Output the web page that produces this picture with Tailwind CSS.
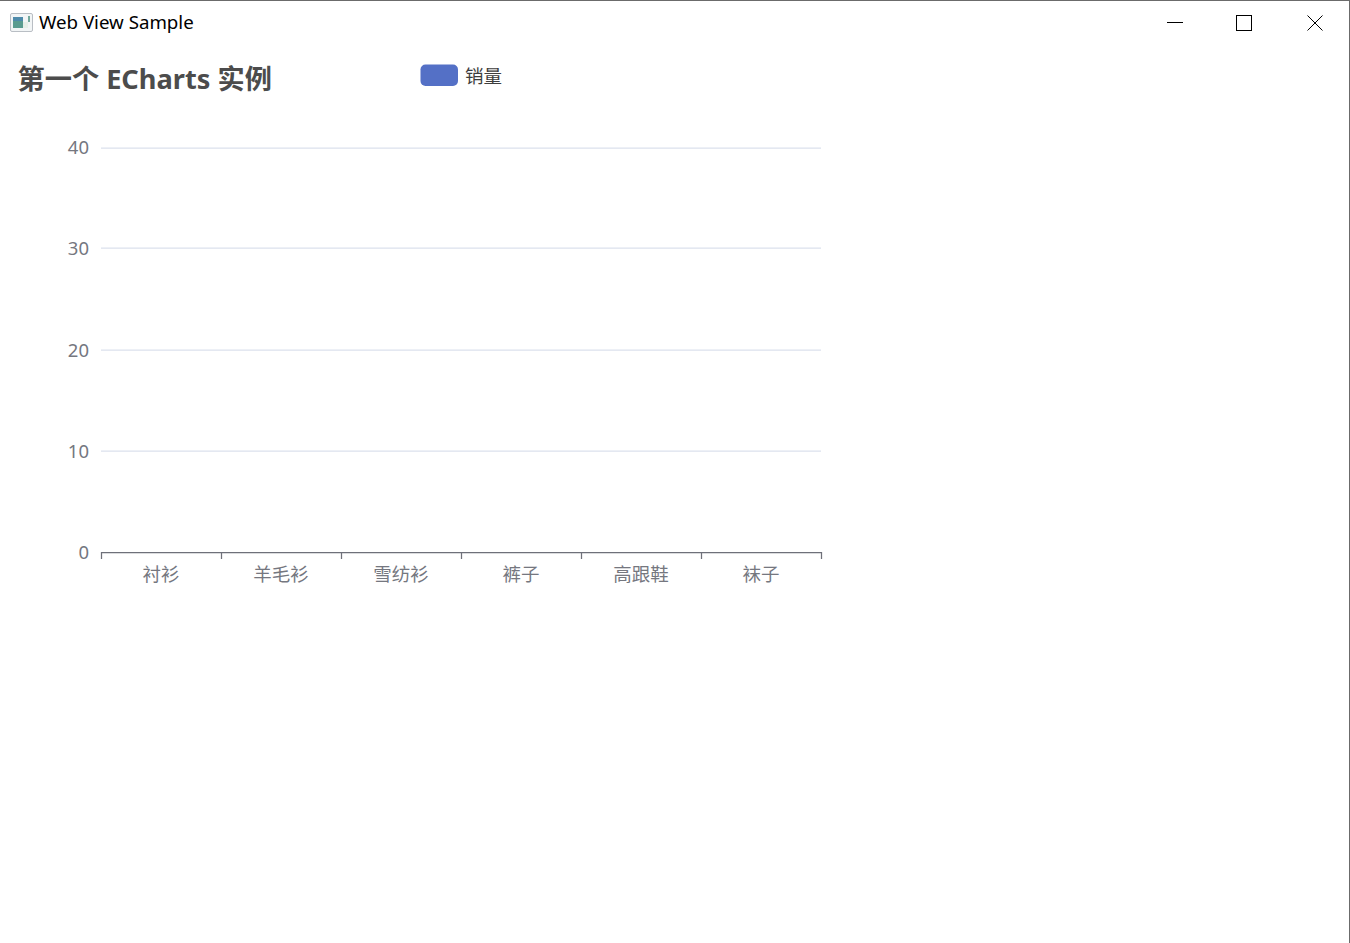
<!DOCTYPE html>
<html lang="en">
<head>
  <meta charset="UTF-8">
  <meta name="viewport" content="width=device-width, initial-scale=1.0">
  <title>Web View Sample</title>
  <script src="https://cdn.jsdelivr.net/npm/@tailwindcss/browser@4"></script>
</head>
<body class="bg-white overflow-hidden">
  <div class="w-[1350px] h-[943px] flex flex-col border-t border-r border-[#6b6b6b] font-['Noto_Sans','Noto_Sans_CJK_SC',sans-serif]">

    <!-- title bar -->
    <div class="h-[44px] flex items-center shrink-0">
      <svg class="ml-[10px] -translate-y-px" width="23" height="19" viewBox="0 0 23 19">
        <rect x="0.5" y="0.5" width="22" height="18" rx="1.5" fill="#f2f5f6" stroke="#b9bec4"/>
        <rect x="3" y="4" width="10" height="11" fill="#5a9c90"/>
        <rect x="3" y="4" width="10" height="4" fill="#4f8bab"/>
        <rect x="13" y="9" width="5" height="6" fill="#e6efe8"/>
        <rect x="18" y="3" width="2" height="6" fill="#74a99c"/>
      </svg>
      <span class="ml-[6px] text-[18.7px] leading-none text-black -translate-y-px">Web View Sample</span>
      <div class="ml-auto flex items-center">
        <svg width="16" height="16" viewBox="0 0 16 16" class="mr-[53px]"><path d="M0 7.5H16" stroke="#000" fill="none"/></svg>
        <svg width="16" height="16" viewBox="0 0 16 16" class="mr-[55px]"><rect x="0.5" y="0.5" width="15" height="15" stroke="#000" fill="none"/></svg>
        <svg width="16" height="16" viewBox="0 0 16 16" class="mr-[26px]"><path d="M0.5 0.5L15.5 15.5M15.5 0.5L0.5 15.5" stroke="#000" fill="none"/></svg>
      </div>
    </div>

    <!-- chart -->
    <svg width="840" height="560" viewBox="0 45 840 560" class="block shrink-0" font-family="'Noto Sans','Noto Sans CJK SC',sans-serif">
      <text x="17.5" y="89" font-size="27.2" font-weight="700" fill="#4c4c4c">第一个 ECharts 实例</text>

      <rect x="420.5" y="64.5" width="37.5" height="21.5" rx="5" fill="#5470c6"/>
      <text x="465" y="83" font-size="18.5" fill="#3d3d3d">销量</text>

      <g stroke="#dbe1ed" stroke-width="1.25" fill="none">
        <path d="M101 148H821"/>
        <path d="M101 248H821"/>
        <path d="M101 350H821"/>
        <path d="M101 451H821"/>
      </g>

      <g font-size="18.5" fill="#75777f" text-anchor="end">
        <text x="89" y="154">40</text>
        <text x="89" y="255">30</text>
        <text x="89" y="357">20</text>
        <text x="89" y="458">10</text>
        <text x="89" y="559">0</text>
      </g>

      <path d="M101.5 559V552.6H821.5V559M221.5 552.6V559M341.5 552.6V559M461.5 552.6V559M581.5 552.6V559M701.5 552.6V559" stroke="#6e7079" stroke-width="1.25" fill="none"/>

      <g font-size="18.5" fill="#75777f" text-anchor="middle">
        <text x="161" y="581">衬衫</text>
        <text x="281" y="581">羊毛衫</text>
        <text x="401" y="581">雪纺衫</text>
        <text x="521" y="581">裤子</text>
        <text x="641" y="581">高跟鞋</text>
        <text x="761" y="581">袜子</text>
      </g>
    </svg>
  </div>
</body>
</html>
